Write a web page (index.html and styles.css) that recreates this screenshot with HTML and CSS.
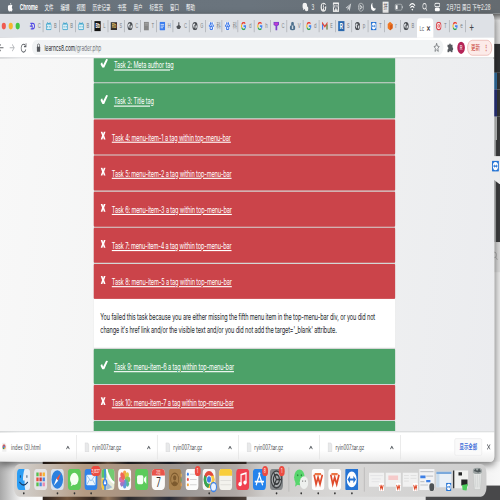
FILE: index.html
```
<!DOCTYPE html>
<html lang="zh-CN">
<head>
<meta charset="utf-8">
<title>learncs8 grader</title>
<link rel="stylesheet" href="styles.css">
</head>
<body>
<div class="viewport">
<svg class="defs" width="0" height="0">
  <symbol id="check" viewBox="0 0 22 16"><path d="M0 9l5-3 3 5L17 0l5 1L11 16H6z" fill="#fff"/></symbol>
  <symbol id="cross" viewBox="0 0 16 16"><path d="M1 1h5l2 4 2-4h5l-4 7 4 7h-5l-2-4-2 4H1l4-7z" fill="#fff"/></symbol>
  <symbol id="google" viewBox="0 0 16 16"><g fill="none" stroke-width="2.8"><path d="M12.6 3.6A6 6 0 0 0 2.7 5.2" stroke="#ea4335"/><path d="M2.7 5.2a6 6 0 0 0 0 5.6" stroke="#fbbc05"/><path d="M2.7 10.8a6 6 0 0 0 9.4 1.6" stroke="#34a853"/><path d="M12.1 12.4A6 6 0 0 0 14 8H8" stroke="#4285f4"/></g></symbol>
  <symbol id="tv" viewBox="0 0 16 16"><path d="M4 1l2 2.500h4L12 1" stroke="#3ba4cc" stroke-width="1.700" fill="none"/><rect x="1" y="4" width="14" height="10.500" rx="2" fill="#d9eef5" stroke="#3ba4cc" stroke-width="2"/><path d="M5 8v2.500M11 8v2.500" stroke="#3ba4cc" stroke-width="2"/></symbol>
  <symbol id="globe" viewBox="0 0 16 16"><circle cx="8" cy="8" r="7.500" fill="#4b4f54"/><path d="M3 4l4-1 2 2-3 2 1 3-2 2-3-5zM10 7l4 0-1 4-3 2-1-3z" fill="#d9dce0"/></symbol>
  <symbol id="paw" viewBox="0 0 16 16"><rect width="16" height="16" rx="2" fill="#eef3fe"/><g fill="#3f79e8"><ellipse cx="5.700" cy="3.500" rx="1.900" ry="2.700"/><ellipse cx="10.300" cy="3.500" rx="1.900" ry="2.700"/><ellipse cx="2.300" cy="7.500" rx="1.700" ry="2.300"/><ellipse cx="13.700" cy="7.500" rx="1.700" ry="2.300"/><path d="M8 6.500c3 0 5 4 5 6s-2 3-5 3-5-1-5-3 2-6 5-6z"/></g><rect x="6" y="10" width="4" height="3" fill="#eef3fe"/></symbol>
  <symbol id="file" viewBox="0 0 14 18"><path d="M1 1h8l4 4v12H1z" fill="#e8e9ea" stroke="#cfd1d3"/></symbol>
  <symbol id="wps" viewBox="0 0 40 40"><rect width="40" height="40" rx="9" fill="#fdfdfd"/><path d="M8 11l6 18 6-13 6 13 7-18" fill="none" stroke="#df4b2c" stroke-width="5"/><path d="M10 10h19" stroke="#ec7645" stroke-width="4"/></symbol>
  <symbol id="wpsmini" viewBox="0 0 16 16"><rect width="16" height="16" rx="3" fill="#fff"/><path d="M3 4l2.500 8L8 6l2.500 6L13 4" fill="none" stroke="#df4b2c" stroke-width="2.600"/></symbol>
  <symbol id="wechat" viewBox="0 0 20 20"><ellipse cx="8" cy="7.500" rx="7.500" ry="6.500"/><ellipse cx="14" cy="13" rx="6" ry="5"/><path d="M3 12l-1 4 4-2z"/></symbol>
  <symbol id="viewer" viewBox="0 0 40 40"><rect width="40" height="40" rx="3" fill="#2574d4"/><circle cx="20" cy="20" r="15" fill="#fff"/><path d="M7 20l8-7v5h10v-5l8 7-8 7v-5H15v5z" fill="#2574d4"/></symbol>
</svg>

<div class="screen">
  <nav class="menubar">
    <svg class="apple" viewBox="0 0 16 18"><path d="M11 0c0 2-1 4-3.500 4C7.500 2 9 .5 11 0zM8 5c1 0 2-1 4-1 1 0 2.500.7 3.200 2-3 2-2.200 5.500.6 6.600C15 15 13.500 18 11.500 18c-1.500 0-1.500-.8-3.200-.8S6.500 18 5 18C2.500 18 0 13.500 0 10c0-3.700 2.300-5.700 4.500-5.700C6 4.300 7 5 8 5z" fill="#fff"/></svg>
    <b>Chrome</b><span>文件</span><span>编辑</span><span>视图</span><span>历史记录</span><span>书签</span><span>用户</span><span>标签页</span><span>窗口</span><span>帮助</span>
    <div class="status">
      <svg class="st w28" viewBox="0 0 20 20" fill="#f3f3f3"><use href="#wechat"/></svg><span class="num">3</span>
      <svg class="st" viewBox="0 0 20 20"><circle cx="10" cy="10" r="9" fill="#eee"/><path d="M9 3c-3 3-4 7-2 11M11 5l5 2-4 3 2 5" stroke="#555d65" stroke-width="3" fill="none"/></svg>
      <svg class="st" viewBox="0 0 20 20"><rect width="20" height="20" rx="2" fill="#eee"/><path d="M3 6l3 9 4-8 4 8 3-9M3 5h14" stroke="#59616a" stroke-width="2" fill="none"/></svg>
      <svg class="st" viewBox="0 0 20 20"><path d="M1 11L19 2l-5 16-4-5-3 4v-5l9-8-11 8z" fill="#c8ccd0"/></svg>
      <svg class="st" viewBox="0 0 20 20"><circle cx="10" cy="10" r="8" fill="none" stroke="#d5d8da" stroke-width="1.600"/><path d="M7 6l7 4-7 4z" fill="none" stroke="#d5d8da" stroke-width="2"/></svg>
      <svg class="st" viewBox="0 0 20 20"><path d="M7 1c-2 7 3 13 11 11-4 9-17 6-16-4 0-3 2-6 5-7z" fill="#fff"/></svg>
      <span class="ime">拼</span>
      <svg class="st w28" viewBox="0 0 28 20"><rect x="2" y="4" width="22" height="12" rx="3" fill="none" stroke="#c5c9cc" stroke-width="1.500"/><rect x="4" y="6" width="6" height="8" fill="#fff"/><path d="M26 8v4" stroke="#c5c9cc" stroke-width="2"/></svg>
      <svg class="st" viewBox="0 0 20 20"><g fill="none" stroke="#fff" stroke-width="2.500"><path d="M1 7q9-8 18 0M4 11q6-5 12 0"/></g><path d="M7 14q3-2 6 0l-3 3z" fill="#fff"/></svg>
      <svg class="st" viewBox="0 0 20 20"><circle cx="9" cy="8" r="5.500" fill="none" stroke="#eee" stroke-width="2"/><path d="M13 12l4 5" stroke="#eee" stroke-width="2"/></svg>
      <svg class="st" viewBox="0 0 20 20"><rect x="2" y="2" width="16" height="7" rx="3.500" fill="none" stroke="#fff" stroke-width="2"/><rect x="2" y="11" width="16" height="7" rx="3" fill="#fff"/></svg>
      <span class="clock">2月7日 周日 下午2:28</span>
    </div>
  </nav>

  <div class="desktop">
    <div class="strip">
      <i class="s1"></i><i class="s2"></i><i class="s3"></i><i class="s4"></i><i class="s0"></i><i class="s5"></i><i class="s6"></i>
      <svg class="find" viewBox="0 0 20 24"><circle cx="7" cy="9" r="7" fill="none" stroke="#999" stroke-width="2"/><path d="M12 15l6 7" stroke="#999" stroke-width="2"/></svg>
    </div>

    <main class="window">
      <div class="tabs">
        <div class="lights"><i class="r"></i><i class="y"></i><i class="g"></i></div>
        <div class="tab"><svg viewBox="0 0 16 16"><path d="M2 3h7a5 5 0 0 1 0 10H3M0 8h9M5 3l3 10" fill="none" stroke="#5148e5" stroke-width="2.500"/></svg>C</div>
        <div class="tab"><svg><use href="#tv"/></svg>B</div>
        <div class="tab"><svg><use href="#tv"/></svg>B</div>
        <div class="tab"><svg><use href="#tv"/></svg>B</div>
        <div class="tab"><span class="fav black">Bb</span>L</div>
        <div class="tab"><span class="fav gold">Rb</span>S</div>
        <div class="tab"><svg><use href="#globe"/></svg>C</div>
        <div class="tab"><svg viewBox="0 0 16 16"><rect x="1" width="14" height="16" fill="#858585"/><path d="M3 3h10M3 6h10" stroke="#c5c5c5"/></svg>T</div>
        <div class="tab"><svg viewBox="0 0 16 16"><rect width="16" height="16" rx="2" fill="#3c7ded"/><path d="M3 5h10M3 8h10M3 11h7" stroke="#fff" stroke-width="1.500"/></svg>H</div>
        <div class="tab"><svg viewBox="0 0 16 16"><path d="M7 1h3v5l5 3-4 4H5L1 9l6-3z" fill="#4f5256"/></svg>C</div>
        <div class="tab"><svg><use href="#globe"/></svg>G</div>
        <div class="tab"><svg><use href="#paw"/></svg>科</div>
        <div class="tab"><svg><use href="#paw"/></svg>科</div>
        <div class="tab"><svg><use href="#google"/></svg>d</div>
        <div class="tab"><svg><use href="#google"/></svg>h</div>
        <div class="tab"><svg viewBox="0 0 16 16"><path d="M0 0h16v6l-5 2v8H6V8L0 6z" fill="#7c3fd0"/><path d="M3 2h10v3l-5 2-5-2z" fill="#c23ccf"/></svg>C</div>
        <div class="tab"><svg viewBox="0 0 16 16"><circle cx="8" cy="4" r="4" fill="#4d6f8c"/><ellipse cx="8" cy="11" rx="8" ry="5" fill="#4d6f8c"/><path d="M6 7h4v6H6z" fill="#cbd5de"/></svg>V</div>
        <div class="tab"><svg><use href="#google"/></svg>d</div>
        <div class="tab"><svg viewBox="0 0 16 16"><path d="M1.500 14V3L8 9l6.500-6v11" fill="none" stroke="#e2473a" stroke-width="3"/><path d="M1.500 14V5" stroke="#4285f4" stroke-width="3"/><path d="M14.500 14V5" stroke="#34a853" stroke-width="3"/></svg>E</div>
        <div class="tab"><span class="fav blue">R</span>S</div>
        <div class="tab"><svg><use href="#globe"/></svg>p</div>
        <div class="tab"><svg><use href="#viewer"/></svg>T</div>
        <div class="tab"><svg viewBox="0 0 16 16"><path d="M8 0l7 4v8l-7 4-7-4V4z" fill="#ee7623"/><path d="M8 7l7-3v8l-7 4z" fill="#d65a14"/></svg>r</div>
        <div class="tab last"><svg><use href="#globe"/></svg>B</div>
        <div class="tab active">Lc<b>×</b></div>
        <div class="tab"><svg viewBox="0 0 16 16"><circle cx="8" cy="8" r="8" fill="#d9434a"/><circle cx="8" cy="8" r="4.500" fill="none" stroke="#fff" stroke-width="1.800"/><path d="M8 5v6" stroke="#fff" stroke-width="1.500"/></svg>T</div>
        <div class="tab"><svg><use href="#google"/></svg>e</div>
        <span class="plus">+</span>
      </div>

      <div class="toolbar">
        <svg class="nav" viewBox="0 0 86 20"><g fill="none" stroke-width="2"><path d="M-4 10h14M2 4l-6 6 6 6" stroke="#63666a"/><path d="M28 10h13M35 4l6 6-6 6" stroke="#b6b9bc"/><path d="M73 6a7 7 0 1 0 1.500 7M75 2v6h-6" stroke="#5f6368"/></g></svg>
        <div class="address">
          <svg viewBox="0 0 12 16"><rect x="1" y="6" width="10" height="9" rx="1" fill="#55585c"/><path d="M3 7V4a3 3 0 0 1 6 0v3" fill="none" stroke="#55585c" stroke-width="1.700"/></svg>
          <span class="url">learncs8.com<em>/grader.php</em></span>
          <svg class="star" viewBox="0 0 20 20"><path d="M10 2l2.300 5.500 5.700.5-4.300 3.800L15 17.500l-5-3-5 3 1.300-5.700L2 8l5.700-.5z" fill="none" stroke="#5f6368" stroke-width="1.600"/></svg>
        </div>
        <svg class="puzzle" viewBox="0 0 20 20"><path d="M2 5h5a2.500 2.500 0 1 1 5 0h5v5a2.500 2.500 0 1 1 0 5v4h-5a2.500 2.500 0 0 0-5 0H2v-5a2.500 2.500 0 0 0 0-5z" fill="#55595e"/></svg>
        <span class="avatar">R</span>
        <span class="update">更新 <b>⋮</b></span>
      </div>

      <section class="page">
        <div class="tasks">
          <div class="task ok first"><svg><use href="#check"/></svg><a>Task 2: Meta author tag</a></div>
          <div class="task ok"><svg><use href="#check"/></svg><a>Task 3: Title tag</a></div>
          <div class="task bad"><svg><use href="#cross"/></svg><a>Task 4: menu-item-1 a tag within top-menu-bar</a></div>
          <div class="task bad"><svg><use href="#cross"/></svg><a>Task 5: menu-item-2 a tag within top-menu-bar</a></div>
          <div class="task bad"><svg><use href="#cross"/></svg><a>Task 6: menu-item-3 a tag within top-menu-bar</a></div>
          <div class="task bad"><svg><use href="#cross"/></svg><a>Task 7: menu-item-4 a tag within top-menu-bar</a></div>
          <div class="task bad open"><svg><use href="#cross"/></svg><a>Task 8: menu-item-5 a tag within top-menu-bar</a></div>
          <p class="detail">You failed this task because you are either missing the fifth menu item in the top-menu-bar div, or you did not<br>change it's href link and/or the visible text and/or you did not add the target='_blank' attribute.</p>
          <div class="task ok"><svg><use href="#check"/></svg><a>Task 9: menu-item-6 a tag within top-menu-bar</a></div>
          <div class="task bad"><svg><use href="#cross"/></svg><a>Task 10: menu-item-7 a tag within top-menu-bar</a></div>
          <div class="task ok cut"></div>
        </div>
      </section>

      <footer class="downloads">
        <div class="dl html"><svg viewBox="0 0 14 18"><path d="M1 1h8l4 4v12H1z" fill="#eee"/><circle cx="6" cy="8" r="4.500" fill="#dd5144"/><path d="M6 8L2 10a4.500 4.500 0 0 0 4 2.500z" fill="#1da462"/><path d="M6 8l4 2a4.500 4.500 0 0 1-4 2.500z" fill="#f4c63a"/><circle cx="6" cy="8" r="2.200" fill="#4c8bf5"/></svg><span>index (3).html</span><b></b></div>
        <div class="dl"><svg><use href="#file"/></svg><span>ryin007.tar.gz</span><b></b></div>
        <div class="dl"><svg><use href="#file"/></svg><span>ryin007.tar.gz</span><b></b></div>
        <div class="dl"><svg><use href="#file"/></svg><span>ryin007.tar.gz</span><b></b></div>
        <div class="dl"><svg><use href="#file"/></svg><span>ryin007.tar.gz</span><b></b></div>
        <span class="showall">显示全部</span>
        <svg class="close" viewBox="0 0 12 12"><path d="M1 1l10 10M11 1L1 11" stroke="#5f6368" stroke-width="2"/></svg>
      </footer>
    </main>

    <div class="dock">
      <div class="app run"><svg viewBox="0 0 40 40"><rect width="40" height="40" rx="9" fill="#e6edf5"/><path d="M9 0h14c-4 8-5 15-5 22h5c0 7 0 12 2 18H9a9 9 0 0 1-9-9V9a9 9 0 0 1 9-9z" fill="#2b9df4"/><path d="M10 12v5M30 12v5M7 25q13 11 26 0" stroke="#173c66" stroke-width="2.500" fill="none"/></svg></div>
      <div class="app"><svg viewBox="0 0 40 40"><rect width="40" height="40" rx="9" fill="#e4e4e6"/><path d="M7 7h7v7H7zM7 26h7v7H7z" fill="#55c04d"/><path d="M16.500 7h7v7h-7z" fill="#f27b35"/><path d="M26 7h7v7h-7z" fill="#f8b32d"/><path d="M7 16.500h7v7H7z" fill="#e84c3d"/><path d="M16.500 16.500h7v7h-7z" fill="#c8373e"/><path d="M26 16.500h7v7h-7zM16.500 26h7v7h-7z" fill="#4d86e0"/><path d="M26 26h7v7h-7z" fill="#e88ab0"/></svg></div>
      <div class="app run"><svg viewBox="0 0 40 40"><rect width="40" height="40" rx="9" fill="#d9e2ec"/><circle cx="20" cy="20" r="17.500" fill="#2b80de"/><path d="M31 8L17.500 18l5 4.500z" fill="#f4513c"/><path d="M9 32l8.500-14 5 4.500z" fill="#fff"/></svg></div>
      <div class="app run"><svg viewBox="0 0 40 40"><rect width="40" height="40" rx="9" fill="#5ccb5b"/><ellipse cx="20" cy="19" rx="13" ry="11.500" fill="#f4fff2"/><path d="M12 27l-3 6 8-3z" fill="#f4fff2"/></svg></div>
      <div class="app run"><svg viewBox="0 0 40 40"><rect width="40" height="40" rx="9" fill="#2f83ea"/><rect x="6" y="11" width="28" height="20" rx="3" fill="#edf5fd"/><path d="M7 12l13 11 13-11M7 30l9-10M33 30l-9-10" stroke="#82b6ea" stroke-width="1.800" fill="none"/></svg><em class="wide">3,827</em></div>
      <div class="app"><svg viewBox="0 0 40 40"><rect width="40" height="40" rx="9" fill="#e9ecd9"/><path d="M0 9a9 9 0 0 1 9-9h6v17H0z" fill="#5ac565"/><path d="M16 0h15a9 9 0 0 1 9 9v22z" fill="#72cb70"/><path d="M16 0q3 20 24 27" stroke="#fff" stroke-width="5" fill="none"/><path d="M0 18h14v22H9a9 9 0 0 1-9-9z" fill="#f4c83e"/><path d="M11 0v40" stroke="#448ee9" stroke-width="5"/><path d="M15 25l18 10-18 5z" fill="#a8bdd1"/><circle cx="11" cy="26" r="7" fill="#377ee6"/><path d="M7 29l4-9 4 9z" fill="#fff"/></svg></div>
      <div class="app"><svg viewBox="0 0 40 40"><rect width="40" height="40" rx="9" fill="#fafafa"/><g opacity=".88"><ellipse cx="20" cy="11" rx="5.500" ry="8" fill="#f69a2d"/><ellipse cx="20" cy="11" rx="5.500" ry="8" fill="#d6c630" transform="rotate(45 20 20)"/><ellipse cx="20" cy="11" rx="5.500" ry="8" fill="#7cc243" transform="rotate(90 20 20)"/><ellipse cx="20" cy="11" rx="5.500" ry="8" fill="#45b08c" transform="rotate(135 20 20)"/><ellipse cx="20" cy="11" rx="5.500" ry="8" fill="#4d8bd9" transform="rotate(180 20 20)"/><ellipse cx="20" cy="11" rx="5.500" ry="8" fill="#9265bf" transform="rotate(225 20 20)"/><ellipse cx="20" cy="11" rx="5.500" ry="8" fill="#db5b9b" transform="rotate(270 20 20)"/><ellipse cx="20" cy="11" rx="5.500" ry="8" fill="#ef5444" transform="rotate(315 20 20)"/></g></svg></div>
      <div class="app"><svg viewBox="0 0 40 40"><rect width="40" height="40" rx="9" fill="#5bcb5b"/><rect x="6" y="12" width="19" height="17" rx="4" fill="#f4fff4"/><path d="M27 18l7-5v15l-7-5z" fill="#f4fff4"/></svg></div>
      <div class="app cal"><span>2月</span><strong>7</strong></div>
      <div class="app"><svg viewBox="0 0 40 40"><rect width="38" height="40" rx="7" fill="#a9824e"/><path d="M38 9v6" stroke="#d9b464" stroke-width="4"/><path d="M38 18v6" stroke="#71a567" stroke-width="4"/><path d="M38 27v6" stroke="#dda05a" stroke-width="4"/><circle cx="18" cy="20" r="12" fill="none" stroke="#7d5a2e" stroke-width="2"/><circle cx="18" cy="17" r="5" fill="#7d5a2e"/><path d="M9 28q9-9 18 0-9 8-18 0z" fill="#7d5a2e"/></svg></div>
      <div class="app"><svg viewBox="0 0 40 40"><rect width="40" height="40" rx="9" fill="#fbfbfb"/><path d="M14 10h20M14 20h20M14 30h20" stroke="#d3d3d3" stroke-width="2"/><circle cx="7.500" cy="10" r="3" fill="#3b82ec"/><circle cx="7.500" cy="20" r="3" fill="#ee5248"/><circle cx="7.500" cy="30" r="3" fill="#f3a63b"/></svg><em>1</em></div>
      <div class="app run"><svg viewBox="0 0 40 40"><rect width="40" height="40" rx="9" fill="#f6f6f6"/><circle cx="20" cy="20" r="16" fill="#e24a3c"/><path d="M6 12a16 16 0 0 0 12 24l8-14-6-2z" fill="#36a653"/><path d="M35 13a16 16 0 0 1-17 23l9-14-1-9z" fill="#f9cb3e"/><circle cx="20" cy="20" r="8" fill="#fff"/><circle cx="20" cy="20" r="6" fill="#3f7fe8"/></svg><u></u></div>
      <div class="app"><svg viewBox="0 0 40 40"><rect width="40" height="40" rx="9" fill="#f3f2ed"/><path d="M0 13V9a9 9 0 0 1 9-9h22a9 9 0 0 1 9 9v4z" fill="#f8cd3b"/><path d="M4 22h32M4 30h32" stroke="#d5d4d0" stroke-width="1.500"/></svg></div>
      <div class="app"><svg viewBox="0 0 40 40"><rect width="40" height="40" rx="9" fill="#f0414f"/><path d="M15 29V11l15-3v18" fill="none" stroke="#fff" stroke-width="3.500"/><ellipse cx="12" cy="29" rx="5" ry="4" fill="#fff"/><ellipse cx="27" cy="26" rx="5" ry="4" fill="#fff"/></svg></div>
      <div class="app"><svg viewBox="0 0 40 40"><rect width="40" height="40" rx="9" fill="#2583ec"/><path d="M22 7L10 31M18 7l12 24M6 24h28" stroke="#fff" stroke-width="3.500" fill="none"/></svg><em>8</em></div>
      <div class="app run"><svg viewBox="0 0 40 40"><rect width="40" height="40" rx="9" fill="#85888a"/><circle cx="20" cy="20" r="16" fill="#a8abad" stroke="#414447" stroke-width="3"/><circle cx="20" cy="20" r="9" fill="none" stroke="#35383a" stroke-width="3.500"/><path d="M20 20h15M20 20L12 7M20 20l-8 13" stroke="#35383a" stroke-width="3"/></svg><em>1</em></div>
      <i class="sep"></i>
      <div class="app run"><svg class="big" viewBox="0 0 44 40"><ellipse cx="17" cy="16" rx="16" ry="15" fill="#58d66d"/><path d="M6 25l-2 9 9-5z" fill="#58d66d"/><ellipse cx="31" cy="26" rx="13" ry="12" fill="#eef0ee"/><g fill="#2c7f3b"><circle cx="12" cy="12" r="2"/><circle cx="23" cy="12" r="2"/></g><g fill="#888"><circle cx="27" cy="23" r="1.700"/><circle cx="35" cy="23" r="1.700"/></g></svg></div>
      <div class="app run"><svg><use href="#wps"/></svg></div>
      <div class="app run"><svg><use href="#wps"/></svg></div>
      <div class="app run"><svg><use href="#viewer"/></svg></div>
      <i class="sep"></i>
      <div class="app mini"><svg viewBox="0 0 44 40"><path d="M0 7h44v25H0z" fill="#f1f1f1"/><path d="M4 12h36M8 18h26M8 23h22" stroke="#d4d4d8"/><use href="#wpsmini" x="29" y="25" width="15" height="15"/></svg></div>
      <div class="app mini"><svg viewBox="0 0 44 40"><path d="M0 7h44v25H0z" fill="#f1f1f1"/><path d="M8 12h28v8H8z" fill="#f5caca"/><use href="#wpsmini" x="29" y="25" width="15" height="15"/></svg></div>
      <div class="app mini"><svg viewBox="0 0 44 40"><path d="M0 7h44v25H0z" fill="#f1f1f1"/><path d="M4 12h14M23 12h17M4 17h14M23 17h17M4 22h14" stroke="#ccc"/><use href="#wpsmini" x="29" y="25" width="15" height="15"/></svg></div>
      <div class="app mini"><svg viewBox="0 0 44 40"><path d="M0 0h44v38H0z" fill="#f2f3f5"/><path d="M3 12h15v5H3zM20 20h12v4H20z" fill="#3d7fe5"/><path d="M3 5h38M3 23h12M20 13h20M3 29h22" stroke="#c2c5ca" stroke-width="2"/><rect x="29" y="26" width="14" height="14" rx="6" fill="#4e5356"/></svg></div>
      <div class="app mini"><svg viewBox="0 0 44 40"><path d="M0 5h44v28H0z" fill="#e9f0f7"/><path d="M0 5h44v4H0z" fill="#7aa9dc"/><path d="M0 9h9v24H0z" fill="#cadcec"/><use href="#viewer" x="28" y="25" width="16" height="15"/></svg></div>
      <div class="app mini"><svg viewBox="0 0 44 40"><path d="M0 3h44v32H0z" fill="#f0f1ef"/><path d="M0 3h4v32H0z" fill="#333"/><path d="M16 6h10v6H16zM24 19h18v11H24z" fill="#242626"/><path d="M26 29l17-2-4 12-11-1z" fill="#4ccb5b"/></svg></div>
      <div class="app trash"><svg viewBox="0 0 34 44"><path d="M4 8l4 34h18l4-34z" fill="#e3e5e4" stroke="#bcbfbe"/><path d="M10 14l2 24M17 14v24M24 14l-2 24" stroke="#c3c7c6"/><ellipse cx="17" cy="7" rx="14" ry="6" fill="#9ca3a3"/><path d="M6 7l5-4 5 4 6-5 6 6-9 2z" fill="#4d5658"/></svg></div>
    </div>

    <div class="helper"><svg><use href="#viewer"/></svg></div>
  </div>
</div>
</div>
</body>
</html>
```
FILE: styles.css
```
* { box-sizing: border-box; }
html, body { margin: 0; width: 500px; height: 500px; }
body { font-family: Inter, "Noto Sans CJK SC", sans-serif; }
.viewport { width: 500px; height: 500px; overflow: hidden; contain: strict; }
.defs { position: absolute; }

/* A 1440 x 900 desktop fitted to the square viewport. */
.screen {
  width: 1440px;
  height: 900px;
  transform: scale(0.34722, 0.55556);
  transform-origin: 0 0;
  display: flex;
  flex-direction: column;
  overflow: hidden;
}

.menubar {
  height: 25px;
  flex: none;
  display: flex;
  align-items: center;
  gap: 20px;
  padding: 0 20px 0 22px;
  background: linear-gradient(90deg, #69737c, #6a747d 50%, #656b70);
  color: #fff;
  font-size: 13px;
  line-height: 20px;
}
.menubar b { font-size: 13.5px; margin-right: -1px; }
.apple { width: 15px; height: 16px; flex: none; }
.status { margin-left: auto; display: flex; align-items: center; gap: 17px; }
.st { width: 19px; height: 18px; }
.w28 { width: 25px; }
.num { margin-left: -12px; }
.ime { background: #eee; color: #555; width: 17px; height: 20px; font-size: 12px; line-height: 20px; text-align: center; }
.clock { white-space: nowrap; width: 134px; letter-spacing: -0.1px; }

.desktop {
  height: 875px;
  position: relative;
  background:
    linear-gradient(#48484a, #48484a) 1226px 849px / 214px 26px no-repeat,
    linear-gradient(90deg, #2e221c, #70533b 12%, #32261f 25%, #94765b 32%, #29282c 42%, #514844 52%, #252a36 62%, #6b5a50 72%, #292321 85%, #4c4039) 123px 806px / 587px 69px no-repeat,
    linear-gradient(90deg, #a8a8a8, #f4f4f4 60px, #fcfcfc 123px, #d9d9d9 700px, #e2e2e2 1226px, #f7f7f7);
}

.strip { position: absolute; right: 0; top: 0; width: 20px; height: 806px; background: #ececec; }
.strip i { display: block; width: 20px; }
.strip .s1 { height: 54px; background: linear-gradient(#6a6a6a, #e3e3e3 12px, #dedede); }
.strip .s2 { height: 52px; background: #303234; }
.strip .s3 { height: 30px; background: linear-gradient(90deg, #3678ae 12px, #343536 12px); }
.strip .s4 { height: 49px; background: linear-gradient(90deg, #2b3582 12px, #343536 12px); }
.strip .s0 { height: 42px; background: linear-gradient(90deg, #c9cbcb 11px, #3c3d3e 12px); }
.strip .s5 { height: 184px; background: linear-gradient(90deg, #b4b6b6 9px, #3c3d3e 10px); }
.strip .s6 { height: 54px; background: #dedede; }
.find { position: absolute; left: 0; top: 423px; width: 14px; height: 26px; }

.window {
  width: 1424px;
  height: 806px;
  position: relative;
  display: flex;
  flex-direction: column;
  border-radius: 0 10px 10px 0;
  overflow: hidden;
  box-shadow: 0 5px 18px rgba(0, 0, 0, .5);
}
.tabs { height: 43px; flex: none; display: flex; align-items: center; background: #dee1e6; }
.lights { width: 78px; flex: none; display: flex; gap: 8px; padding-left: 5px; }
.lights i { width: 12px; height: 12px; border-radius: 50%; }
.r { background: #ef5b50; }
.y { background: #f5b62f; }
.g { background: #42c643; }
.tab {
  width: 46.8px;
  height: 22px;
  flex: none;
  display: flex;
  align-items: center;
  gap: 7px;
  padding-left: 7px;
  overflow: hidden;
  border-right: 2px solid #a9acb1;
  color: #777b80;
  font-size: 12px;
  line-height: 22px;
}
.tab svg { width: 17px; height: 16px; flex: none; }
.fav { width: 18px; height: 18px; line-height: 18px; flex: none; text-align: center; font-size: 10px; font-weight: 700; }
.black { background: #111; color: #fff; }
.gold { background: #34302b; color: #e3bc6b; height: 14px; line-height: 14px; }
.blue { background: #2a68ae; color: #fff; font-size: 14px; }
.tab.last { border-color: transparent; }
.tab.active { height: 35px; align-self: flex-end; background: #fff; border: 0; border-radius: 8px 8px 0 0; gap: 6px; padding-left: 7px; color: #55585c; }
.active b { font-size: 19px; font-weight: 500; color: #333; }
.plus { font-size: 23px; line-height: 22px; margin-left: 9px; color: #44474b; }

.toolbar { height: 35px; flex: none; display: flex; align-items: center; background: #fff; }
.nav { width: 86px; height: 20px; margin-right: 6px; flex: none; }
.address { width: 1185px; flex: none; height: 27px; border-radius: 14px; background: #f1f3f4; display: flex; align-items: center; gap: 11px; padding: 0 10px 0 13px; }
.address svg { width: 12px; height: 16px; }
.url { font-size: 14px; line-height: 20px; letter-spacing: -.15px; color: #26282b; }
.url em { font-style: normal; color: #74787d; }
.address .star { width: 19px; height: 19px; margin-left: auto; }
.puzzle { width: 19px; height: 19px; margin-left: 10px; flex: none; }
.avatar { width: 22px; height: 22px; flex: none; border-radius: 50%; margin-left: 11px; background: #b52457; color: #fff; font-size: 12px; line-height: 22px; text-align: center; }
.update { width: 71px; height: 28px; flex: none; margin-left: 7px; border: 1.500px solid #df8a82; border-radius: 14px; background: #fcebe9; color: #ca4438; font-size: 13px; line-height: 24px; display: flex; justify-content: center; gap: 11px; }

.page { height: 673px; flex: none; overflow: hidden; background: linear-gradient(100deg, #f8f8f8, #f0f1f1 60%, #ebecef); border-top: 2px solid #dfe1e3; }
.tasks { width: 868px; margin-left: 270px; background: #d4d6d5; display: flex; flex-direction: column; gap: 2px; }
.task { height: 63px; flex: none; display: flex; align-items: center; padding-left: 19px; font-size: 16px; line-height: 24px; color: #fff; border-radius: 2px; }
.task a { text-decoration: underline; text-decoration-thickness: 1.500px; text-underline-offset: 2px; letter-spacing: -.3px; }
.ok { background: #4ca168; }
.bad { background: #cb444a; }
.task svg { width: 22px; height: 16px; margin: -5px 17px 0 0; }
.bad svg { width: 16px; }
.first { margin-top: -20px; }
.cut { height: 20px; }
.detail { margin: -2px 0 0; height: 88px; padding: 20px 19px; background: #fff; color: #24282c; font-size: 16px; line-height: 24px; letter-spacing: -.31px; white-space: nowrap; }

.downloads { height: 55px; flex: none; display: flex; align-items: center; background: linear-gradient(#fff 60%, #ececec); border-top: 2px solid #dcdedf; }
.dl { width: 233.3px; height: 44px; flex: none; display: flex; align-items: center; padding: 0 17px 0 22px; border-right: 2px solid #e2e2e2; font-size: 13px; color: #4b4e52; }
.dl.html { width: 221px; padding-left: 5px; }
.dl svg { width: 15px; height: 18px; margin-right: 8px; }
.dl.html svg { margin-right: 12px; }
.dl b { width: 7px; height: 7px; margin: 5px 3px 0 auto; border: solid #5f6368; border-width: 2px 0 0 2px; transform: rotate(45deg); }
.showall { width: 79px; height: 31px; margin-left: 155px; flex: none; border: 1px solid #e2e3e5; border-radius: 4px; background: #fafafa; color: #3f6fd9; font-size: 12.500px; font-weight: 600; line-height: 29px; text-align: center; }
.close { width: 11px; height: 11px; margin-left: 14px; }

.dock {
  position: absolute;
  left: 40px;
  top: 810px;
  width: 1361px;
  height: 59px;
  display: flex;
  padding: 9px 2px 0 4px;
  border-radius: 16px;
  background: linear-gradient(90deg, #d5d3d1, #c6bbb0 7%, #b49b83 15%, #a69383 26%, #9d9997 36%, #b0a9a5 47%, #cfcdcb 53%, #d8d7d6 70%, #cecece);
}
.app { width: 48.5px; height: 50px; flex: none; position: relative; display: flex; align-items: flex-start; justify-content: center; }
.app svg { width: 38px; height: 38px; }
.app .big { width: 42px; }
.mini svg { width: 45px; height: 40px; }
.run::after { content: ""; position: absolute; left: 22px; bottom: 4px; width: 5px; height: 4px; border-radius: 50%; background: #333; }
.app em { position: absolute; right: 0; top: -5px; min-width: 17px; height: 18px; padding: 0 3px; border-radius: 9px; background: #ec4b41; color: #fff; font-size: 10px; line-height: 18px; text-align: center; font-style: normal; }
.app em.wide { padding: 0; width: 28px; font-size: 9px; right: -3px; }
.app u { position: absolute; right: 1px; top: 23px; width: 20px; height: 19px; border: 3px solid #3f83e6; border-radius: 50%; background: #e9f2ff; }
.app.cal { flex-direction: column; width: 38px; height: 38px; margin: 0 5.250px; border-radius: 9px; overflow: hidden; background: #fafafa; align-items: stretch; justify-content: flex-start; text-align: center; }
.cal span { height: 12px; background: #e9544b; color: #fff; font-size: 8px; line-height: 12px; }
.cal strong { font-size: 23px; font-weight: 400; line-height: 26px; color: #333; }
.trash svg { height: 42px; margin-top: -3px; }
.sep { width: 2px; height: 44px; margin: -3px 10.500px 0; flex: none; background: #b4b3b2; }

.helper { position: absolute; left: 1413px; top: 256px; width: 27px; height: 51px; padding: 8px 3px 0 4px; background: #ececec; clip-path: polygon(20% 0, 100% 0, 100% 100%, 0 75%, 0 8%); }
.helper svg { width: 20px; height: 20px; }
```
